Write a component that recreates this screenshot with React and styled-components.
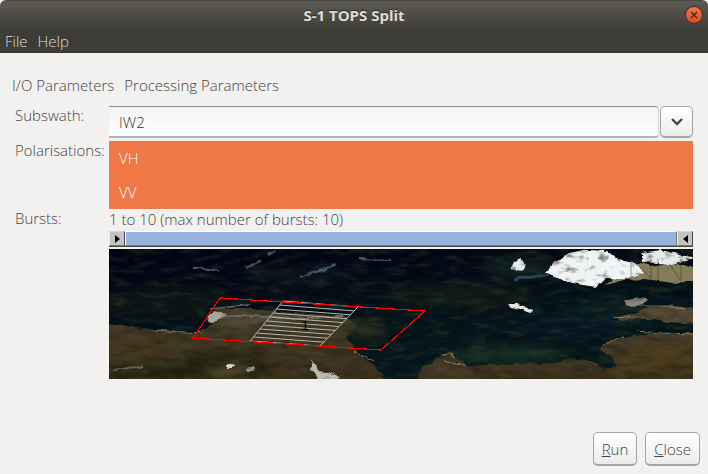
import React, { useState } from "react";
import styled, { createGlobalStyle, css } from "styled-components";

const Global = createGlobalStyle`
  * { box-sizing: border-box; }
  body {
    margin: 0;
    background: #f2f1f0;
    color: #444;
    font: 300 15px/20px "Open Sans", "Noto Sans", sans-serif;
  }
  button, select { font: inherit; color: inherit; }
`;

const Window = styled.main`
  display: flex;
  flex-direction: column;
  min-height: 100vh;
  background: #f2f1f0;
`;

const Chrome = styled.header`
  background: linear-gradient(#5d5a52 0, #3e3c37 30px, #3e3c37 100%);
  border-top: 1px solid #4a4842;
  border-bottom: 1px solid #383632;
  border-radius: 6px 6px 0 0;
  color: #dfdbd2;
`;

const TitleBar = styled.div`
  display: grid;
  grid-template-columns: 18px 1fr 18px;
  align-items: center;
  height: 28px;
  padding: 0 5px;
`;

const Title = styled.h1`
  margin: 0;
  text-align: center;
  font-size: 15px;
  line-height: 20px;
  font-weight: 700;
  text-shadow: 0 -1px #2b2a27;
`;

const WindowClose = styled.button`
  display: grid;
  place-items: center;
  width: 18px;
  height: 18px;
  padding: 0;
  border: 1px solid #33312d;
  border-radius: 50%;
  background: linear-gradient(#f4794f, #dd4a1a);
  color: #3a2018;
`;

const MenuBar = styled.nav`
  display: flex;
  gap: 10px;
  height: 23px;
  padding: 0 5px;
`;

const PlainButton = styled.button`
  padding: 0;
  border: 0;
  background: none;
  line-height: 20px;
`;

const TabList = styled.div`
  display: flex;
  gap: 10px;
  padding: 22px 12px 0;
`;

const Form = styled.form`
  display: flex;
  flex-direction: column;
  flex: 1;
`;

const Fields = styled.div`
  display: grid;
  grid-template-columns: 94px 1fr;
  padding: 11px 15px 0;
`;

const Label = styled.label`
  line-height: 18px;
  white-space: nowrap;
`;

const Combo = styled.div`
  display: grid;
  grid-template-columns: 1fr 33px;
  gap: 1px;
  height: 32px;
  margin-bottom: 3px;
`;

const Select = styled.select`
  appearance: none;
  padding: 0 10px;
  border: 0;
  border-top: 1px solid #8e8e8c;
  border-right: 1px solid #d6d6d4;
  border-bottom: 2px solid #b4b4b2;
  border-radius: 0 4px 4px 0;
  background: linear-gradient(#f3f3f3, #fff);
  color: #333;
`;

const raised = css`
  border: 1px solid #a5a5a2;
  border-bottom-width: 2px;
  border-radius: 5px;
  background: linear-gradient(#fff, #ececeb);
`;

const Arrow = styled.button`
  ${raised}
  display: grid;
  place-items: center;
  padding: 0;
`;

const List = styled.div`
  display: flex;
  flex-direction: column;
`;

const Option = styled.button`
  height: 34px;
  padding: 0 10px;
  border: 0;
  text-align: left;
  background: ${(p) => (p.$on ? "#f07746" : "#fff")};
  color: ${(p) => (p.$on ? "#fff" : "#444")};
`;

const Bursts = styled.div`
  display: flex;
  flex-direction: column;
`;

const Range = styled.div`
  display: flex;
  height: 16px;
  margin: 2px 0;
  border-bottom: 1px solid #444;
`;

const Thumb = styled.button`
  display: grid;
  place-items: center;
  width: 16px;
  padding: 0;
  border: 1px solid;
  border-color: #d8d8d8 #444 #777 #eee;
  background: #c3c3c3;
  color: #000;
`;

const Track = styled.div`
  flex: 1;
  border: 1px solid;
  border-color: #fff #777 #777 #fff;
  background: #98b3dd;
`;

const Map = styled.svg`
  display: block;
  width: 100%;
  height: 130px;
`;

const MapNumber = styled.text`
  font: 400 13px "Liberation Sans", sans-serif;
  text-anchor: middle;
`;

const Actions = styled.footer`
  display: flex;
  justify-content: flex-end;
  gap: 8px;
  margin-top: auto;
  padding: 0 8px 8px;
`;

const Action = styled.button`
  ${raised}
  height: 34px;
  padding: 0 8px;
`;

const lines = Array.from({ length: 11 }, (_, i) => i / 10);

const soilShapes = [
  "M-4 75 45 80 83 84 104 76 99 68 107 60 145 60 178 64 234 66 248 77 237 88 248 103 266 118 279 134H-4Z",
  "M305 134 313 119 332 107 342 104 358 117 401 115 448 114 463 109 486 113 494 120 508 118 503 108 491 102 495 94 519 88 545 84 590 84V134H305Z",
];

function BurstMap() {
  return (
    <Map viewBox="0 0 584 130" preserveAspectRatio="none" role="img" aria-label="Burst footprint map">
      <defs>
        <linearGradient id="sea" x1="0" y1="0" x2="0.35" y2="1">
          <stop offset="0" stopColor="#020314" />
          <stop offset="0.35" stopColor="#040b18" />
          <stop offset="0.6" stopColor="#05131b" />
          <stop offset="1" stopColor="#06181d" />
        </linearGradient>
        <linearGradient id="soil" x1="0" y1="0" x2="0" y2="1">
          <stop offset="0" stopColor="#453d2a" />
          <stop offset="1" stopColor="#3a301a" />
        </linearGradient>
        <filter id="rough" x="-5%" y="-10%" width="110%" height="120%" colorInterpolationFilters="sRGB">
          <feTurbulence type="fractalNoise" baseFrequency="0.1 0.16" numOctaves="2" seed="4" result="n" />
          <feDisplacementMap in="SourceGraphic" in2="n" scale="5" xChannelSelector="R" yChannelSelector="G" />
          <feGaussianBlur stdDeviation="0.6" />
        </filter>
        <filter id="soft" x="-30%" y="-50%" width="160%" height="200%" colorInterpolationFilters="sRGB">
          <feGaussianBlur stdDeviation="5" />
        </filter>
        <filter id="dark" x="0" y="0" width="100%" height="100%" colorInterpolationFilters="sRGB">
          <feTurbulence type="fractalNoise" baseFrequency="0.05 0.14" numOctaves="5" seed="8" />
          <feColorMatrix values="0 0 0 0 0  0 0 0 0 0  0 0 0 0 0  2 0 0 0 -0.8" />
        </filter>
        <filter id="light" x="0" y="0" width="100%" height="100%" colorInterpolationFilters="sRGB">
          <feTurbulence type="fractalNoise" baseFrequency="0.05 0.16" numOctaves="5" seed="22" />
          <feColorMatrix values="0 0 0 0 0.3  0 0 0 0 0.33  0 0 0 0 0.22  0 2 0 0 -0.95" />
        </filter>
        <filter id="snow" x="-5%" y="-5%" width="110%" height="110%" colorInterpolationFilters="sRGB">
          <feTurbulence type="fractalNoise" baseFrequency="0.09 0.16" numOctaves="3" seed="14" result="n" />
          <feDisplacementMap in="SourceGraphic" in2="n" scale="5" xChannelSelector="R" yChannelSelector="G" result="shape" />
          <feColorMatrix in="n" values="0 0 0 0 0.45  0 0 0 0 0.45  0 0 0 0 0.4  3 0 0 0 -1.6" result="specks" />
          <feComposite in="specks" in2="shape" operator="atop" />
          <feGaussianBlur stdDeviation="0.6" />
        </filter>
      </defs>
      <rect width="584" height="130" fill="url(#sea)" />
      <g filter="url(#soft)" opacity="0.85">
        <ellipse cx="60" cy="52" rx="65" ry="16" fill="#0b1816" />
        <ellipse cx="190" cy="27" rx="55" ry="8" fill="#0c1a20" />
        <ellipse cx="350" cy="47" rx="75" ry="12" fill="#131e18" />
        <ellipse cx="400" cy="106" rx="60" ry="8" fill="#1a3528" />
        <ellipse cx="500" cy="64" rx="50" ry="13" fill="#0c2422" />
        <ellipse cx="455" cy="78" rx="55" ry="13" fill="#071826" />
        <ellipse cx="410" cy="18" rx="38" ry="13" fill="#0f2020" />
      </g>
      <g filter="url(#rough)">
        {soilShapes.map((d) => <path key={d} d={d} fill="url(#soil)" />)}
        <path d="M505 69 528 63 542 58 560 56 588 60V75L560 73 544 70 528 70 511 72Z" fill="#574b35" />
        <path d="M514 52 530 49 539 50 534 56 519 57Z" fill="#8b8580" />
      </g>
      <g filter="url(#soft)" opacity="0.75">
        <path d="M0 130 0 124 60 114 90 106 120 101 150 108 165 130Z" fill="#1c200e" />
        <ellipse cx="35" cy="98" rx="45" ry="10" fill="#463a1c" />
        <ellipse cx="255" cy="80" rx="22" ry="10" fill="#34361f" />
        <ellipse cx="119" cy="121" rx="22" ry="6" fill="#605638" />
        <ellipse cx="145" cy="72" rx="38" ry="5" fill="#62594a" />
        <path d="M500 125 525 95 584 94 584 122Z" fill="#503f1c" />
        <path d="M300 130 345 112 370 130Z" fill="#4e3f2b" />
      </g>
      <g fill="none" stroke="#5d7885" filter="url(#rough)" opacity="0.75">
        <path d="M83 19 93 19 111 22M137 19 151 12M159 6 166 3M191 28 217 20 227 14M250 10 282 11" strokeWidth="2" />
        <path d="M406 30 437 26 448 20" strokeWidth="3" stroke="#375c7d" />
        <path d="M101 60 141 56M109 68 145 66 185 70 234 67M6 121 25 118 35 119" stroke="#8c8571" strokeWidth="2" />
        <path d="M244 102 266 113M332 106 342 104 347 108M334 112 356 117" stroke="#aba68f" />
        <path d="M42 81 94 84M530 57 555 57 575 60M505 69 528 67M528 82 553 84 584 85M495 95 515 88" stroke="#a3987b" />
      </g>
      <rect width="584" height="130" filter="url(#dark)" opacity="0.3" />
      <rect width="584" height="130" filter="url(#light)" opacity="0.4" />
      <g filter="url(#snow)">
        <path d="M511 22 531 14 543 17 562 13 590 20V32L563 34 536 30 515 31 496 36Z" fill="#857d58" />
        <path d="M436 24 447 12 461 5 479 1 497 2 508 11 526 14 535 24 515 30 498 29 487 38 474 36 455 32Z" fill="#f0f3f4" />
        <path d="M533 4 551 1 570 5 586 10 563 15 533 13Z" fill="#e5eaea" />
        <path d="M401 20 405 12 412 9 418 17 414 22Z" fill="#e8eef0" />
      </g>
      <path d="M399 55 409 55 423 61 422 64 414 61 402 58Z" fill="#e2e6e5" filter="url(#rough)" />
      <g filter="url(#snow)">
        <path d="M98 67 105 61 118 65 108 72 101 73Z" fill="#a9a498" />
        <path d="M202 112 208 116 207 122 219 123 232 128 228 132H210L202 121Z" fill="#bdb9af" />
      </g>
      <path d="M490 106 502 108 503 116 490 115Z" fill="#10251a" filter="url(#rough)" />
      <path d="M522 10V30M542 10V32M549 10V32M572 10V32M525 13 541 28M561 15 571 31" stroke="#282a1e" fill="none" opacity="0.45" />
      <g fill="#d9d6c8" filter="url(#rough)">
        <ellipse cx="121" cy="117" rx="4" ry="2" />
        <ellipse cx="142" cy="120" rx="4" ry="2" opacity="0.6" />
      </g>
      <g stroke="#b5b5b0" fill="none">
        <path d="M174 52 141 92M249 58 211 97" />
        {lines.map((t) => (
          <line key={t} x1={174 - 33 * t} y1={52 + 40 * t} x2={249 - 38 * t} y2={58 + 39 * t} />
        ))}
      </g>
      <path d="M111 49 316 62 272 101 84 89Z" fill="none" stroke="#f00" strokeWidth="1.2" shapeRendering="crispEdges" />
      <MapNumber x="196" y="81">1</MapNumber>
    </Map>
  );
}

export default function App() {
  const [selected, setSelected] = useState({ VH: true, VV: true });
  return (
    <>
      <Global />
      <Window>
        <Chrome>
          <TitleBar>
            <span />
            <Title>S-1 TOPS Split</Title>
            <WindowClose aria-label="Close window">
              <svg width="8" height="8" viewBox="0 0 8 8"><path d="M1 1 7 7M7 1 1 7" stroke="currentColor" strokeWidth="1.2" /></svg>
            </WindowClose>
          </TitleBar>
          <MenuBar>
            <PlainButton>File</PlainButton>
            <PlainButton>Help</PlainButton>
          </MenuBar>
        </Chrome>
        <TabList role="tablist">
          <PlainButton role="tab" aria-selected="false">I/O Parameters</PlainButton>
          <PlainButton role="tab" aria-selected="true">Processing Parameters</PlainButton>
        </TabList>
        <Form onSubmit={(e) => e.preventDefault()}>
          <Fields>
            <Label htmlFor="subswath">Subswath:</Label>
            <Combo>
              <Select id="subswath" defaultValue="IW2">
                <option>IW1</option>
                <option>IW2</option>
                <option>IW3</option>
              </Select>
              <Arrow type="button" aria-label="Show subswaths">
                <svg width="12" height="8" viewBox="0 0 12 8"><path d="M1 1 6 6 11 1" fill="none" stroke="#444" strokeWidth="2.4" /></svg>
              </Arrow>
            </Combo>
            <Label as="span" id="pol">Polarisations:</Label>
            <List role="listbox" aria-multiselectable="true" aria-labelledby="pol">
              {Object.keys(selected).map((k) => (
                <Option key={k} type="button" role="option" aria-selected={selected[k]} $on={selected[k]}
                  onClick={() => setSelected({ ...selected, [k]: !selected[k] })}>{k}</Option>
              ))}
            </List>
            <Label as="span">Bursts:</Label>
            <Bursts>
              <span>1 to 10 (max number of bursts: 10)</span>
              <Range>
                <Thumb type="button" aria-label="First burst"><svg width="5" height="8" viewBox="0 0 5 8"><path d="M0 0 5 4 0 8Z" /></svg></Thumb>
                <Track />
                <Thumb type="button" aria-label="Last burst"><svg width="5" height="8" viewBox="0 0 5 8"><path d="M5 0 0 4 5 8Z" /></svg></Thumb>
              </Range>
              <BurstMap />
            </Bursts>
          </Fields>
          <Actions>
            <Action type="submit"><u>R</u>un</Action>
            <Action type="button"><u>C</u>lose</Action>
          </Actions>
        </Form>
      </Window>
    </>
  );
}
